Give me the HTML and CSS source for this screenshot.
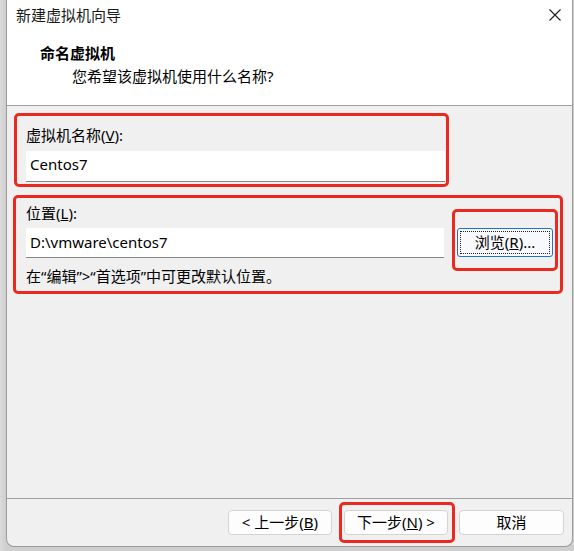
FILE: index.html
```html
<!DOCTYPE html>
<html lang="zh-CN">
<head>
<meta charset="utf-8">
<title>新建虚拟机向导</title>
<link rel="stylesheet" href="styles.css">
</head>
<body>
<div class="window">
  <div class="header">
    <div class="titlebar">
      <span class="title">新建虚拟机向导</span>
      <svg class="close" viewBox="0 0 12 12" width="12" height="12" aria-hidden="true">
        <path d="M0.5 0.5 L11.5 11.5 M11.5 0.5 L0.5 11.5" stroke="#1a1a1a" stroke-width="1.1" fill="none"/>
      </svg>
    </div>
    <div class="heading">命名虚拟机</div>
    <div class="subheading">您希望该虚拟机使用什么名称?</div>
  </div>
  <div class="content">
    <div class="mark group-name">
      <div class="label">虚拟机名称(<u>V</u>):</div>
      <div class="textbox name-box">Centos7</div>
    </div>
    <div class="mark group-location">
      <div class="label">位置(<u>L</u>):</div>
      <div class="field-row">
        <div class="textbox path-box">D:\vmware\centos7</div>
        <div class="mark browse-mark">
          <div class="browse-btn"><span class="focus-ring">浏览(<u>R</u>)...</span></div>
        </div>
      </div>
      <div class="hint">在“编辑”&gt;“首选项”中可更改默认位置。</div>
    </div>
  </div>
  <div class="footer">
    <div class="btn">&lt; 上一步(<u>B</u>)</div>
    <div class="mark next-mark">
      <div class="btn">下一步(<u>N</u>) &gt;</div>
    </div>
    <div class="btn cancel">取消</div>
  </div>
</div>
</body>
</html>
```

FILE: styles.css
```css
html, body {
  margin: 0;
  padding: 0;
}

body {
  width: 574px;
  height: 551px;
  overflow: hidden;
  background: linear-gradient(to right, #dadada 0, #cfcfcf 6px);
  background-color: #cbcbcb;
  font-family: "Noto Sans", "Noto Sans CJK SC", sans-serif;
  font-size: 15px;
  color: #000;
}

.window {
  margin-left: 6px;
  width: 567px;
  height: 547px;
  box-sizing: border-box;
  border-left: 1px solid #9b9b9b;
  border-right: 1px solid #9b9b9b;
  border-bottom: 1px solid #9b9b9b;
  border-radius: 0 0 8px 8px;
  background: #f0f0f0;
  display: flex;
  flex-direction: column;
  overflow: hidden;
}

.header {
  background: #fff;
  height: 106px;
  box-sizing: border-box;
  border-bottom: 1px solid #a0a0a0;
}

.titlebar {
  height: 30px;
  display: flex;
  align-items: center;
  justify-content: space-between;
  padding: 0 11px 0 9px;
}

.title {
  line-height: 30px;
  color: #1a1a1a;
}

.close {
  display: block;
  width: 12px;
  height: 12px;
}

.heading {
  margin-top: 13px;
  padding-left: 33px;
  font-weight: bold;
  line-height: 20px;
}

.subheading {
  margin-top: 3px;
  padding-left: 65px;
  line-height: 20px;
}

.content {
  flex: 1;
  padding-top: 7px;
}

.mark {
  border: 3px solid #ea2a20;
  border-radius: 5px;
  box-sizing: border-box;
}

.label {
  line-height: 20px;
}

.textbox {
  background: #fff;
  border-bottom: 1px solid #858585;
  box-sizing: border-box;
  padding-left: 4px;
  white-space: nowrap;
}

.group-name {
  margin-left: 7px;
  width: 435px;
  height: 74px;
  padding: 9px 2px 2px 9px;
}

.name-box {
  margin-top: 6px;
  width: 419px;
  height: 31px;
  line-height: 27px;
}

.group-location {
  margin: 8px 0 0 6px;
  width: 550px;
  height: 99px;
  padding: 5px 2px 5px 10px;
}

.field-row {
  display: flex;
  align-items: center;
  gap: 8px;
  margin-top: 5px;
  height: 30px;
}

.path-box {
  width: 418px;
  height: 30px;
  line-height: 29px;
}

.browse-mark {
  width: 106px;
  height: 62px;
  margin: -19px 0 -13px;
  padding: 16px 0 0 2px;
}

.browse-btn {
  width: 96px;
  height: 29px;
  box-sizing: border-box;
  border: 1px solid #1a73c8;
  border-radius: 3px;
  background: #f7f9fc;
  padding: 2px;
}

.focus-ring {
  display: block;
  height: 100%;
  box-sizing: border-box;
  border: 1px dotted #222;
  text-align: center;
  line-height: 21px;
}

.hint {
  margin-top: 8px;
  line-height: 20px;
}

.footer {
  height: 48px;
  box-sizing: border-box;
  border-top: 1px solid #a0a0a0;
  display: flex;
  align-items: center;
  justify-content: flex-end;
  padding-right: 8px;
}

.btn {
  width: 104px;
  height: 25px;
  box-sizing: border-box;
  border: 1px solid #d3d3d3;
  border-radius: 4px;
  background: #fdfdfd;
  text-align: center;
  line-height: 23px;
}

.next-mark {
  width: 116px;
  height: 41px;
  padding: 5px 0 0 2px;
  margin: 0 4px 0 7px;
}

.cancel {
  width: 105px;
}
```
